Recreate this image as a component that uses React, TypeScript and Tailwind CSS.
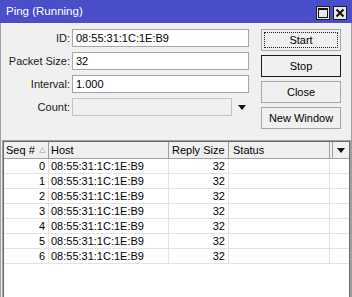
import React from "react";

const rows = [0, 1, 2, 3, 4, 5, 6];
const mac = "08:55:31:1C:1E:B9";

function TitleButton({ kind }: { kind: "max" | "close" }) {
  return (
    <div className="w-[14px] h-[14px] border border-[#1a1a1a] bg-[#e8e8e8] flex items-center justify-center">
      {kind === "max" ? (
        <svg width="10" height="10" viewBox="0 0 10 10">
          <rect x="0.5" y="0.5" width="9" height="9" fill="none" stroke="#111" strokeWidth="1" />
          <rect x="0" y="0" width="10" height="2" fill="#111" />
        </svg>
      ) : (
        <svg width="10" height="10" viewBox="0 0 10 10">
          <path d="M1.5 1.5 L8.5 8.5 M8.5 1.5 L1.5 8.5" stroke="#111" strokeWidth="2" />
        </svg>
      )}
    </div>
  );
}

function Field({ label, value, disabled }: { label: string; value?: string; disabled?: boolean }) {
  return (
    <div className="flex items-center h-[18px]">
      <div className="w-[70px] pr-[1px] text-right text-[#1a1a1a]">{label}:</div>
      <div className="ml-[1px] flex items-center">
        {disabled ? (
          <>
            <div className="w-[160px] h-[18px] border border-[#c4c4c4] bg-[#f0f0f0]" />
            <svg className="ml-[6px]" width="8" height="5" viewBox="0 0 8 5">
              <path d="M0 0 H8 L4 5 Z" fill="#111" />
            </svg>
          </>
        ) : (
          <div className="w-[177px] h-[18px] border border-[#a6a6a6] bg-white pl-[3px] leading-[16px]">{value}</div>
        )}
      </div>
    </div>
  );
}

function Btn({ label, variant }: { label: string; variant?: "focus" | "default" }) {
  const border = variant === "default" ? "border-[#1a1a1a]" : "border-[#a6a6a6]";
  return (
    <div className={`relative w-[80px] h-[22px] border ${border} bg-[#f0f0f0] flex items-center justify-center`}>
      {variant === "focus" && (
        <div className="absolute inset-[2px] border border-dotted border-[#222]" />
      )}
      <span>{label}</span>
    </div>
  );
}

export default function App() {
  return (
    <div className="w-[352px] h-[297px] overflow-hidden flex flex-col bg-[#f0f0f0] font-['Liberation_Sans',Arial,sans-serif] text-[11px] text-black">
      <div className="h-[23px] shrink-0 bg-[#4a4fc9] flex items-center pl-[6px] pr-[5px] text-white">
        <span className="flex-1 text-[11.5px]">Ping (Running)</span>
        <div className="flex gap-[3px] mt-[2px]">
          <TitleButton kind="max" />
          <TitleButton kind="close" />
        </div>
      </div>

      <div className="flex-1 flex flex-col border-x border-[#a0a0a0] pt-[6px] min-h-0">
        <div className="flex">
          <div className="flex flex-col gap-[5px]">
            <Field label="ID" value={mac} />
            <Field label="Packet Size" value="32" />
            <Field label="Interval" value="1.000" />
            <Field label="Count" disabled />
          </div>
          <div className="ml-[12px] flex flex-col gap-[4px]">
            <Btn label="Start" variant="focus" />
            <Btn label="Stop" variant="default" />
            <Btn label="Close" />
            <Btn label="New Window" />
          </div>
        </div>

        <div className="mt-[11px] ml-[1px] flex-1 border border-[#a0a0a0] min-h-0 -mb-[4px]">
          <div className="h-full border border-[#6b6b6b] bg-white flex flex-col">
            <div className="grid grid-cols-[45px_120px_60px_101px_3px_1fr] h-[17px] border-b border-[#a0a0a0] bg-[#f0f0f0] leading-[16px]">
              <div className="border-r border-[#a0a0a0] pl-[2px] flex items-center gap-[4px]">
                <span>Seq #</span>
                <svg width="7" height="6" viewBox="0 0 7 6">
                  <path d="M3.5 0.5 L6.5 5.5 H0.5 Z" fill="none" stroke="#c0c0c0" strokeWidth="1" />
                </svg>
              </div>
              <div className="border-r border-[#a0a0a0] pl-[2px]">Host</div>
              <div className="border-r border-[#a0a0a0] pl-[3px]">Reply Size</div>
              <div className="border-r border-[#a0a0a0] pl-[4px]">Status</div>
              <div className="border-r border-[#a0a0a0]" />
              <div className="flex items-center justify-center">
                <svg width="8" height="5" viewBox="0 0 8 5">
                  <path d="M0 0 H8 L4 5 Z" fill="#111" />
                </svg>
              </div>
            </div>
            {rows.map((n) => (
              <div key={n} className="grid grid-cols-[45px_120px_60px_101px_1fr] h-[15px] border-b border-[#e3e3e3] leading-[14px]">
                <div className="border-r border-[#e3e3e3] text-right pr-[3px]">{n}</div>
                <div className="border-r border-[#e3e3e3] pl-[2px]">{mac}</div>
                <div className="border-r border-[#e3e3e3] text-right pr-[3px]">32</div>
                <div className="border-r border-[#e3e3e3]" />
                <div />
              </div>
            ))}
          </div>
        </div>
      </div>
    </div>
  );
}
